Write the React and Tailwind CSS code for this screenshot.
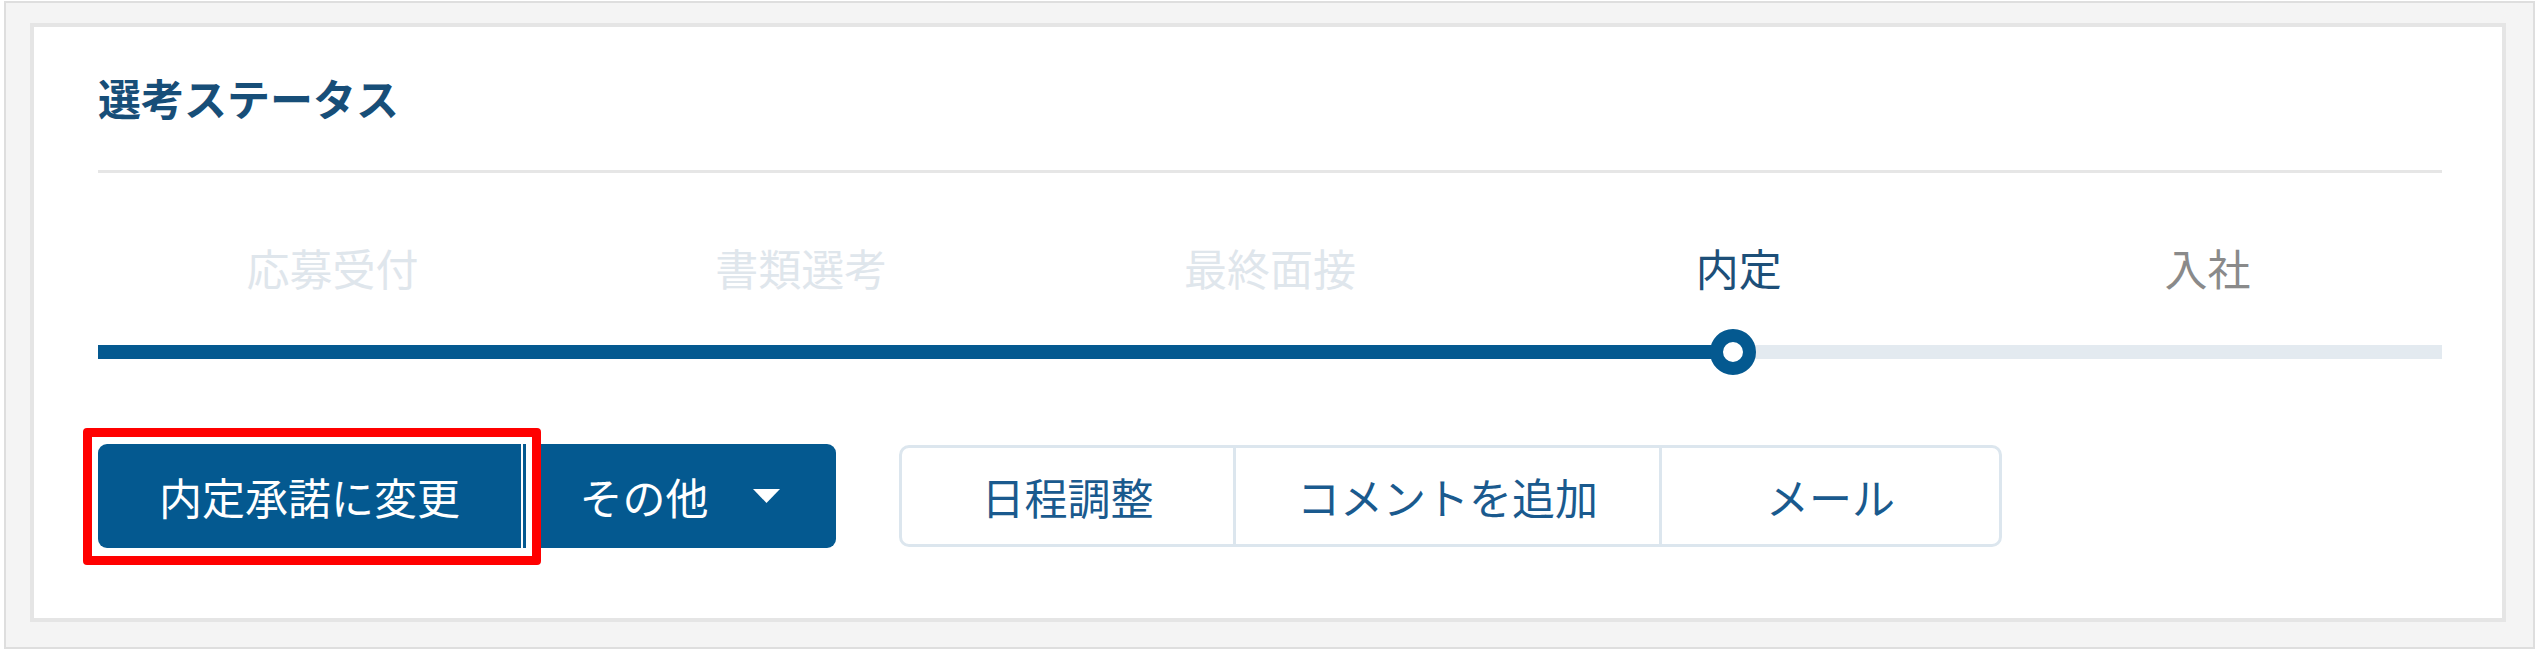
import React from 'react';

const steps = [
  { label: '応募受付', state: 'done' },
  { label: '書類選考', state: 'done' },
  { label: '最終面接', state: 'done' },
  { label: '内定', state: 'current' },
  { label: '入社', state: 'todo' },
];

const labelColor = {
  done: 'text-[#dfe6ec]',
  current: 'text-[#1d4f78]',
  todo: 'text-[#8a8a8a]',
};

const actions = [
  { label: '日程調整', width: 'w-[331px]' },
  { label: 'コメントを追加', width: 'w-[426px]' },
  { label: 'メール', width: 'w-[340px]' },
];

const SelectionStatusCard = () => {
  const progress = 69.75;

  return (
    <div className="border-4 border-[#e5e5e5] bg-white pl-[64px] pr-[60px] pt-[49px] pb-[70px]">
      <h2 className="text-[43px] leading-[42px] font-bold text-[#174e78]">選考ステータス</h2>
      <div className="mt-[52px] h-[3px] bg-[#e6e6e6]" />

      <div className="mt-[74px] grid grid-cols-5 text-center">
        {steps.map((step) => (
          <span key={step.label} className={`text-[43px] leading-[40px] ${labelColor[step.state]}`}>
            {step.label}
          </span>
        ))}
      </div>

      <div className="relative mt-[42px] h-[46px] flex items-center">
        <div className="relative w-full h-[14px] bg-[#e3eaf0]">
          <div className="h-full bg-[#045990]" style={{ width: `${progress}%` }} />
        </div>
        <div
          className="absolute top-1/2 -translate-x-1/2 -translate-y-1/2 w-[46px] h-[46px] rounded-full border-[13px] border-[#045990] bg-white"
          style={{ left: `${progress}%` }}
        />
      </div>

      <div className="mt-[69px] flex items-center">
        <div className="flex h-[104px]">
          <div className="relative">
            <button className="h-full w-[423px] rounded-l-[9px] bg-[#045990] text-[43px] text-white">
              内定承諾に変更
            </button>
            <div className="absolute -left-[15px] -top-[16px] -right-[20px] -bottom-[17px] rounded-[4px] border-[9px] border-[#ff0000]">
              <div className="h-full w-full border-[6px] border-white" />
            </div>
          </div>
          <button className="ml-[2px] h-full w-[313px] rounded-r-[9px] bg-[#045990] text-[43px] text-white flex items-center justify-center gap-[44px]">
            <span>その他</span>
            <svg width="27" height="14" viewBox="0 0 27 14">
              <polygon points="0,0 27,0 13.5,14" fill="#ffffff" />
            </svg>
          </button>
        </div>

        <div className="ml-[63px] flex h-[102px] rounded-[10px] border-[3px] border-[#dce6ee] bg-white">
          {actions.map((a, i) => (
            <button
              key={a.label}
              className={`${a.width} h-full text-[43px] text-[#1a5a8e] ${i > 0 ? 'border-l-[3px] border-[#dce6ee]' : ''}`}
            >
              {a.label}
            </button>
          ))}
        </div>
      </div>
    </div>
  );
};

export default function App() {
  return (
    <div
      className="w-[2539px] h-[650px] bg-white pt-[1px] px-[4px] pb-[1px]"
      style={{ fontFamily: '"Noto Sans CJK JP", "Noto Sans", sans-serif' }}
    >
      <div className="h-full border-2 border-[#dedede] bg-[#f4f4f4] pt-[20px] pl-[24px] pr-[27px] pb-[25px]">
        <SelectionStatusCard />
      </div>
    </div>
  );
}
